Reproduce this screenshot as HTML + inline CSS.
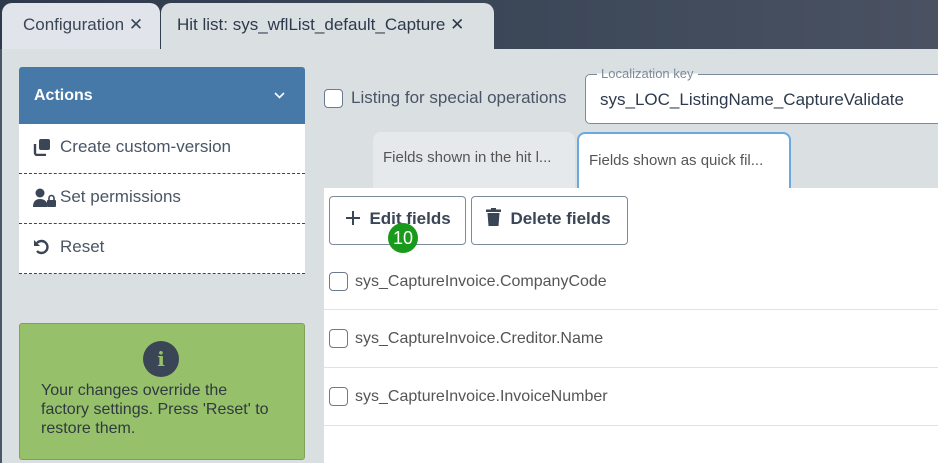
<!DOCTYPE html>
<html><head><style>
*{box-sizing:border-box;margin:0;padding:0}
body{width:938px;height:463px;overflow:hidden;background:#dadfe2;font-family:"Liberation Sans",sans-serif;position:relative;color:#3a4556}
.top{position:absolute;left:0;top:0;width:938px;height:49px;background:linear-gradient(90deg,#2e3a4c,#3d4859 60%,#4a5262)}
.tab{position:absolute;top:3px;height:46px;border-radius:10px 10px 0 0;font-size:17px;line-height:44px;white-space:nowrap}
.t1{left:2px;width:158px;background:#e2e4ec;padding-left:21px;color:#3a4556}
.t2{left:161px;width:333px;background:#dadfe2;padding-left:16px;color:#2e3a4c;height:47px}
.a{position:absolute;left:0;top:49px;width:2px;height:414px;background:#4a5565}
.panel{position:absolute;left:19px;top:67px;width:286px}
.hdr{height:57px;background:#4679a8;border-radius:3px 3px 0 0;color:#fff;font-weight:bold;font-size:16px;line-height:57px;padding-left:15px;position:relative}
.item{height:50px;background:#fff;border-bottom:1px dashed #444;font-size:17px;line-height:46px;padding-left:41px;color:#4a5565;position:relative}
.item svg{position:absolute;left:14px;top:14px}
.green{position:absolute;left:19px;top:323px;width:286px;height:137px;background:#97c06b;border:1px solid #7ea25a;border-radius:3px;font-size:16px;color:#2f3a40;padding:57px 0 0 21px;line-height:19px}
.info{position:absolute;left:123px;top:17px;width:36px;height:36px;border-radius:50%;background:#3a4556;color:#97c06b;font-weight:bold;text-align:center;line-height:36px;font-size:20px;font-family:"DejaVu Serif",serif}
.cb{position:absolute;width:19px;height:19px;border:1px solid #6c7a8e;border-radius:4px;background:#fff}
.inp{position:absolute;left:585px;top:74px;width:360px;height:50px;background:#fff;border:1px solid #7c8a9c;border-radius:5px;font-size:17px;padding:15px 0 0 14px;color:#2e3a4c}
.lbl{position:absolute;left:11px;top:-9px;background:linear-gradient(#dadfe2 50%,#fff 50%);padding:0 4px;font-size:13px;color:#7c8a9c}
.st{position:absolute;top:132px;height:56px;font-size:15px;line-height:52px;padding-left:10px;color:#555}
.content{position:absolute;left:324px;top:188px;width:614px;height:275px;background:#fff}
.btn{position:absolute;top:8px;height:49px;border:1px solid #7c8a9c;border-radius:4px;font-size:17px;font-weight:bold;color:#3a4556;line-height:43px}
.row{position:absolute;left:0;width:614px;height:58px;border-bottom:1px solid #e2e2e2;font-size:16px;color:#555}
</style></head><body>
<div class="top"></div>
<div class="tab t1">Configuration ✕</div>
<div class="tab t2">Hit list: sys_wflList_default_Capture ✕</div>
<div class="a"></div>
<div class="panel">
<div class="hdr">Actions<svg style="position:absolute;right:20px;top:25px" width="11" height="7" viewBox="0 0 11 7"><path d="M1 1l4.5 4.5L10 1" stroke="#fff" stroke-width="1.6" fill="none"/></svg></div>
<div class="item"><svg width="18" height="18" viewBox="0 0 18 18"><rect x="6" y="1" width="11" height="11" rx="2" fill="#3a4556"/><path d="M2 6v9a2 2 0 002 2h9" stroke="#3a4556" stroke-width="2.4" fill="none"/></svg>Create custom-version</div>
<div class="item"><svg width="24" height="20" viewBox="0 0 24 20"><circle cx="7" cy="5" r="4.5" fill="#3a4556"/><path d="M0 19c0-6 3-8 7-8s6 2 7 4v4z" fill="#3a4556"/><rect x="14" y="12" width="9" height="7" rx="1" fill="#3a4556"/><path d="M16 12v-2a2.5 2.5 0 015 0v2" stroke="#3a4556" stroke-width="1.6" fill="none"/></svg>Set permissions</div>
<div class="item"><svg width="18" height="18" viewBox="0 0 18 18"><path d="M4 5A6 6 0 1 1 4 13" stroke="#3a4556" stroke-width="2.4" fill="none"/><path d="M1 2v6h6z" fill="#3a4556"/></svg>Reset</div>
</div>
<div class="green"><div class="info">i</div>Your changes override the<br>factory settings. Press 'Reset' to<br>restore them.</div>
<div class="cb" style="left:324px;top:89px"></div>
<div style="position:absolute;left:351px;top:88px;font-size:17px;color:#4a5565">Listing for special operations</div>
<div class="inp"><span class="lbl">Localization key</span>sys_LOC_ListingName_CaptureValidate</div>
<div class="st" style="left:373px;width:202px;background:#e6e9eb;border-radius:8px 8px 0 0">Fields shown in the hit l...</div>
<div class="st" style="left:577px;width:214px;background:#fff;border:2px solid #6aa9e0;border-bottom:none;border-radius:8px 8px 0 0;line-height:54px">Fields shown as quick fil...</div>
<div class="content">
<div class="btn" style="left:5px;width:137px;padding-left:16px"><svg width="14" height="14" viewBox="0 0 14 14" style="vertical-align:-1px"><path d="M7 0v14M0 7h14" stroke="#3a4556" stroke-width="2"/></svg>&nbsp; Edit fields</div>
<div class="btn" style="left:147px;width:157px;padding-left:14px"><svg width="15" height="18" viewBox="0 0 15 18" style="vertical-align:-2px"><rect x="0" y="1.5" width="15" height="2.5" fill="#3a4556"/><rect x="5" y="0" width="5" height="2" fill="#3a4556"/><path d="M1.5 5h12l-1 13h-10z" fill="#3a4556"/></svg>&nbsp; Delete fields</div>
<div style="position:absolute;left:64px;top:35px;width:30px;height:30px;border-radius:50%;background:#1a9a1a;color:#fff;font-size:18px;text-align:center;line-height:30px">10</div>
<div class="row" style="top:64px"><div class="cb" style="left:5px;top:20px"></div><span style="position:absolute;left:31px;top:21px">sys_CaptureInvoice.CompanyCode</span></div>
<div class="row" style="top:122px"><div class="cb" style="left:5px;top:19px"></div><span style="position:absolute;left:31px;top:20px">sys_CaptureInvoice.Creditor.Name</span></div>
<div class="row" style="top:180px"><div class="cb" style="left:5px;top:19px"></div><span style="position:absolute;left:31px;top:20px">sys_CaptureInvoice.InvoiceNumber</span></div>
</div>
</body></html>
